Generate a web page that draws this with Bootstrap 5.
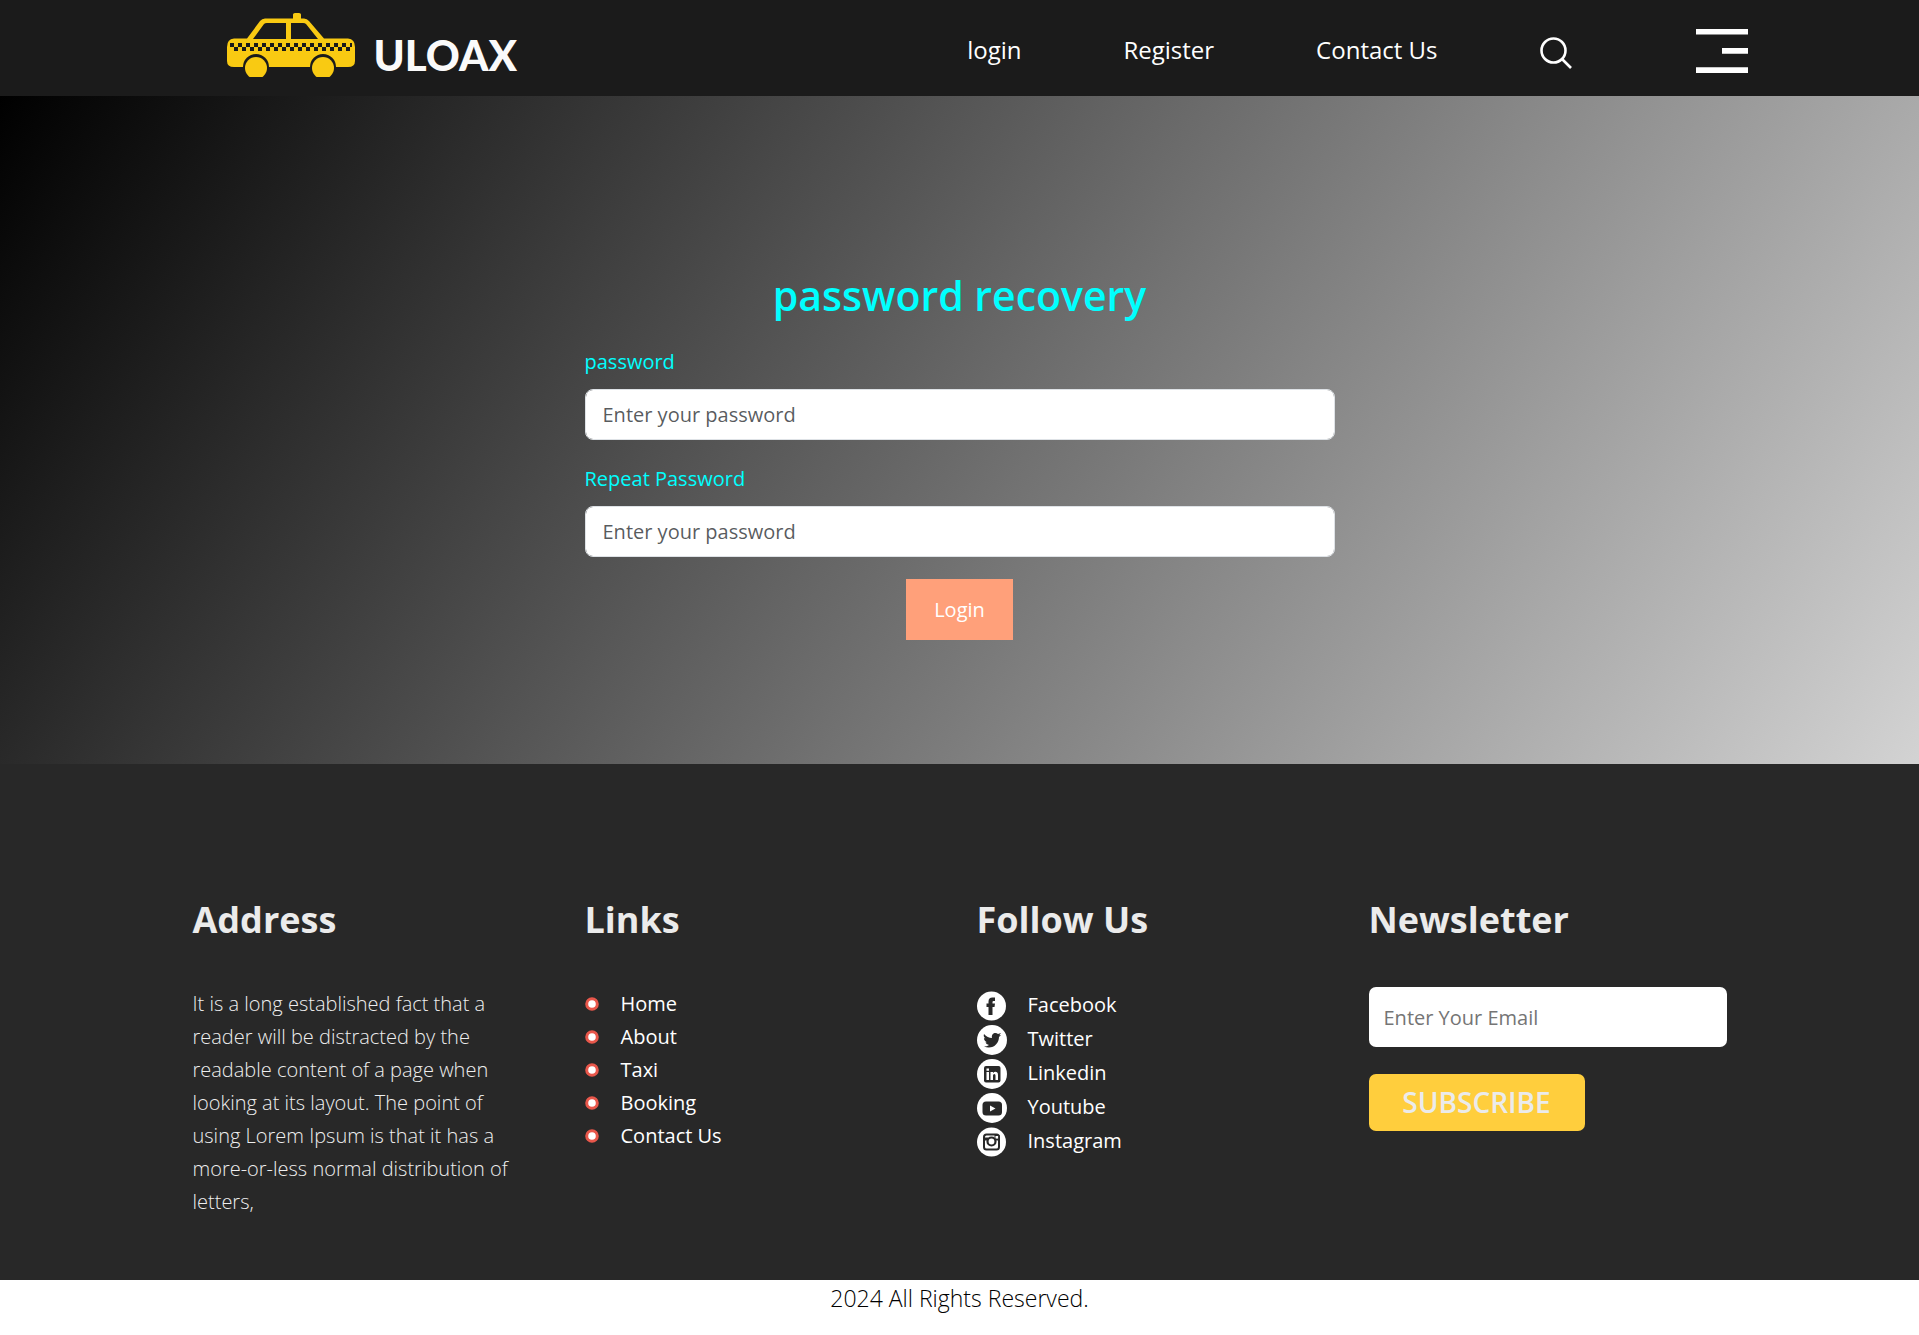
<!DOCTYPE html>
<html lang="en">
<head>
<meta charset="utf-8">
<meta name="viewport" content="width=device-width, initial-scale=1">
<title>Uloax - password recovery</title>
<link href="https://cdn.jsdelivr.net/npm/bootstrap@5.3.0/dist/css/bootstrap.min.css" rel="stylesheet">
<style>
  body { font-family: "Open Sans", "Noto Sans", sans-serif; font-size: 20px; line-height: 33px; background: #fff; }
  a { text-decoration: none; }
  .page-wrap { width: 100%; max-width: 1568px; margin: 0 auto; }
  .page-wrap > .row { --bs-gutter-x: 34px; margin: 0; }
  .site-header { background: #1b1b1b; min-height: 96px; }
  .header-bar { max-width: 1576px; }
  .brand-link { color: #fafafa; font-family: Lato, sans-serif; font-size: 42px; font-weight: 900; line-height: 52px; gap: 19px; margin-left: 55px; padding-bottom: 4px; }
  .brand-link span { padding-top: 18px; }
  .brand-link svg { margin-bottom: 2px; }
  .menu-links { gap: 102px; font-size: 24px; padding-top: 3px; }
  .menu-links a { color: #fff; }
  .icon-btn { background: none; border: 0; padding: 3px 0 0; line-height: 0; }
  .menu-toggle { margin-left: 22px; }
  .recovery { background: linear-gradient(125deg, #000, #d3d3d3); min-height: 668px; padding: 167px 0 124px; }
  .recovery h1 { color: #0ff; font-size: 41px; font-weight: 600; line-height: 64px; margin-bottom: 18px; }
  .recovery label { color: #0ff; margin-bottom: 11px; }
  .recovery .form-control { font-size: 20px; line-height: 33px; padding: 8px 17px; border-radius: 8px; }
  .recovery .field-block { margin-bottom: 22px; }
  .login-btn { background: #ffa07a; color: #fff; border: 0; padding: 14px 28px; }
  .site-footer { background: #282828; color: #eee; padding: 129px 0 62px; }
  .site-footer h2 { font-size: 36px; font-weight: 700; line-height: 53px; margin-bottom: 41px; color: #ebebeb; }
  .site-footer a { color: #fff; }
  .address-text { font-weight: 300; padding-right: 34px; }
  .list-dots a { gap: 22px; }
  .list-social li { height: 34px; }
  .list-social a { gap: 21px; }
  .list-social svg { width: 30px; height: 30px; margin-top: 4px; }
  .email-box { width: 100%; height: 60px; border: 0; border-radius: 7px; padding: 0 15px; margin-bottom: 27px; }
  .email-box::placeholder { color: #757575; }
  .subscribe-btn { background: #ffce3d; color: #ebebeb; border: 0; border-radius: 7px; padding: 0; font-size: 28px; font-weight: 600; line-height: 57px; width: 216px; }
  .legal { color: #000; font-size: 23px; font-weight: 300; line-height: 37px; padding-bottom: 17px; }
</style>
</head>
<body>
<header class="site-header d-flex align-items-center">
  <div class="page-wrap header-bar d-flex align-items-center justify-content-between">
    <a class="brand-link d-flex align-items-center" href="#">
      <svg width="128" height="64" viewBox="0 0 128 64" aria-hidden="true">
        <defs><pattern id="checks" x="3" y="30" width="8" height="8" patternUnits="userSpaceOnUse"><path d="M0 0h4v4H0zM4 4h4v4H4z" fill="#1b1b1b"/></pattern></defs>
        <path fill="#f9ca12" d="M7 25.500H20L33 8Q35 5.500 38 5.500H66V1.500Q66 0 68 0H72Q74 0 74 1.500V5.500H77Q80 5.500 82 8L97 25.500H121Q128 26 128 34V48Q128 54 121 54H109A13 13 0 0 0 83 54H42A13 13 0 0 0 16 54H7Q0 54 0 48V34Q0 26 7 25.500Z"/>
        <path fill="#1b1b1b" d="M26 26 37 11Q38 10 40 10H59V26ZM64 10H76Q78 10 79 11L91 26H64Z"/>
        <path fill="url(#checks)" d="M3 30H125V38H3z"/>
        <circle cx="29" cy="55" r="11" fill="#f9ca12"/><circle cx="96" cy="55" r="11" fill="#f9ca12"/>
      </svg>
      <span>ULOAX</span>
    </a>
    <nav class="menu-links d-flex align-items-center" aria-label="Main">
      <a href="#">login</a>
      <a href="#">Register</a>
      <a href="#">Contact Us</a>
      <button class="icon-btn" type="button" aria-label="Search">
        <svg class="mt-1" width="32" height="32" viewBox="0 0 32 32" fill="none" stroke="#fff" stroke-width="2.600"><circle cx="13.500" cy="13.500" r="12"/><path d="M22 22 31 31"/></svg>
      </button>
      <button class="icon-btn menu-toggle" type="button" aria-label="Menu">
        <svg width="52" height="44" viewBox="0 0 52 44" fill="#fff"><path d="M0 0H52V5.500H0zM26 19H52V24.700H26zM0 38.300H52V44H0z"/></svg>
      </button>
    </nav>
  </div>
</header>

<main class="recovery">
  <div class="page-wrap">
    <div class="row justify-content-center">
      <form class="col-12 col-md-6">
        <h1 class="text-center">password recovery</h1>
        <div class="field-block">
          <label class="d-block" for="pw1">password</label>
          <input class="form-control" id="pw1" type="password" placeholder="Enter your password">
        </div>
        <div class="field-block">
          <label class="d-block" for="pw2">Repeat Password</label>
          <input class="form-control" id="pw2" type="password" placeholder="Enter your password">
        </div>
        <div class="text-center"><button class="login-btn" type="submit">Login</button></div>
      </form>
    </div>
  </div>
</main>

<footer>
  <div class="site-footer">
    <div class="page-wrap">
      <div class="row">
        <section class="col-12 col-sm-6 col-lg-3">
          <h2>Address</h2>
          <p class="address-text mb-0">It is a long established fact that a reader will be distracted by the readable content of a page when looking at its layout. The point of using Lorem Ipsum is that it has a more-or-less normal distribution of letters,</p>
        </section>
        <section class="col-12 col-sm-6 col-lg-3">
          <h2>Links</h2>
          <svg class="d-none" aria-hidden="true"><symbol id="dot" viewBox="0 0 14 14"><circle cx="7" cy="7" r="5.300" fill="#fff" stroke="#e8574b" stroke-width="3"/></symbol></svg>
          <ul class="list-unstyled list-dots mb-0">
            <li><a class="d-flex align-items-center" href="#"><svg width="14" height="14"><use href="#dot"/></svg>Home</a></li>
            <li><a class="d-flex align-items-center" href="#"><svg width="14" height="14"><use href="#dot"/></svg>About</a></li>
            <li><a class="d-flex align-items-center" href="#"><svg width="14" height="14"><use href="#dot"/></svg>Taxi</a></li>
            <li><a class="d-flex align-items-center" href="#"><svg width="14" height="14"><use href="#dot"/></svg>Booking</a></li>
            <li><a class="d-flex align-items-center" href="#"><svg width="14" height="14"><use href="#dot"/></svg>Contact Us</a></li>
          </ul>
        </section>
        <section class="col-12 col-sm-6 col-lg-3">
          <h2>Follow Us</h2>
          <ul class="list-unstyled list-social mb-0">
            <li><a class="d-inline-flex align-items-center" href="#"><svg viewBox="0 0 30 30"><circle cx="14.500" cy="15" r="14.500" fill="#fff"/><path fill="#282828" d="M11.500 24V16H9.500V12.500H11.500V10.500Q11.500 6.500 15.500 6.500H18V10H16.500Q15.500 10 15.500 11V12.500H18L17.500 16H15.500V24Z"/></svg>Facebook</a></li>
            <li><a class="d-inline-flex align-items-center" href="#"><svg viewBox="0 0 30 30"><circle cx="15" cy="15" r="15" fill="#fff"/><path fill="#282828" d="M7 9Q10.500 13 15 13C14 8.500 18.500 6.500 21 9L24 8 22.300 10.300 24 10 22 12C22 19 15.500 25 7 21.500Q10 21.500 12 20 9 19.500 8.500 17.300H10Q7 16 7 13L8.500 13.500Q6 11.500 7 9Z"/></svg>Twitter</a></li>
            <li><a class="d-inline-flex align-items-center" href="#"><svg viewBox="0 0 30 30"><circle cx="15" cy="15" r="15" fill="#fff"/><rect x="7" y="7" width="16.500" height="16.500" rx="2" fill="#282828"/><path fill="#fff" d="M9.500 13H12V21H9.500zM9.500 9.500H12V11.700H9.500zM13.500 13H16V14Q18 12 20 13.300 21 14 21 16V21H18.500V16.500Q18.500 15 17.300 15 16 15 16 16.500V21H13.500Z"/></svg>Linkedin</a></li>
            <li><a class="d-inline-flex align-items-center" href="#"><svg viewBox="0 0 30 30"><circle cx="15" cy="15" r="15" fill="#fff"/><rect x="5.500" y="8.500" width="19.500" height="14" rx="3.500" fill="#282828"/><path fill="#fff" d="M13 12.500 18.500 15.500 13 18.500Z"/></svg>Youtube</a></li>
            <li><a class="d-inline-flex align-items-center" href="#"><svg viewBox="0 0 30 30"><circle cx="14.500" cy="15" r="14.500" fill="#fff"/><rect x="7" y="7.500" width="15" height="15" rx="2.500" fill="none" stroke="#282828" stroke-width="2"/><path fill="#282828" d="M7 10.500H11.500V13.500H7zM17.500 8H22.500V13.500H17.500z"/><rect x="18.500" y="9" width="2.600" height="2.600" fill="#fff"/><circle cx="14.500" cy="14.500" r="4" fill="#fff" stroke="#282828" stroke-width="2.200"/></svg>Instagram</a></li>
          </ul>
        </section>
        <section class="col-12 col-sm-6 col-lg-3">
          <h2>Newsletter</h2>
          <form>
            <input class="email-box" type="email" placeholder="Enter Your Email" aria-label="Email">
            <button class="subscribe-btn" type="submit">SUBSCRIBE</button>
          </form>
        </section>
      </div>
    </div>
  </div>
  <p class="legal text-center mb-0">2024 All Rights Reserved.</p>
</footer>
<script src="https://cdn.jsdelivr.net/npm/bootstrap@5.3.0/dist/js/bootstrap.bundle.min.js"></script>
</body>
</html>
